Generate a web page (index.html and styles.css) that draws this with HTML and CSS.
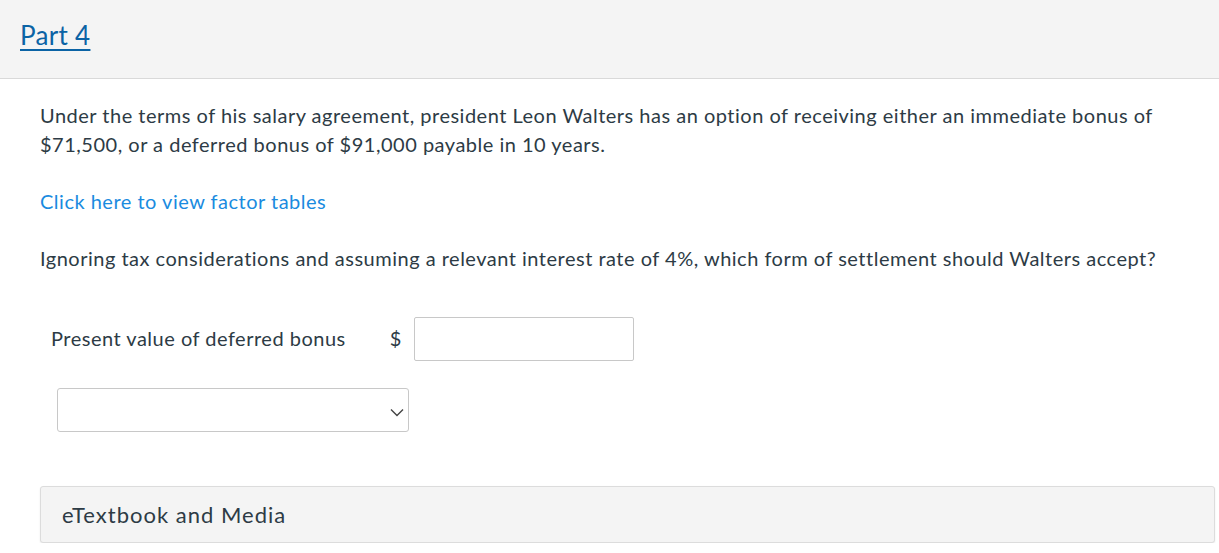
FILE: index.html
```html
<!DOCTYPE html>
<html>
<head>
<meta charset="utf-8">
<link rel="stylesheet" href="styles.css">
</head>
<body>
<header class="part-header">
  <a class="part-link" href="#">Part 4</a>
</header>
<main class="content">
  <p class="text">Under the terms of his salary agreement, president Leon Walters has an option of receiving either an immediate bonus of $71,500, or a deferred bonus of $91,000 payable in 10 years.</p>
  <p class="text link-row"><a class="factor-link" href="#">Click here to view factor tables</a></p>
  <p class="text">Ignoring tax considerations and assuming a relevant interest rate of 4%, which form of settlement should Walters accept?</p>
  <div class="answer-row">
    <span class="answer-label">Present value of deferred bonus</span>
    <span class="currency">$</span>
    <span class="input-box"></span>
  </div>
  <div class="select-row">
    <div class="select-box">
      <svg class="chevron" width="14" height="9" viewBox="0 0 14 9"><path d="M1 1.5 L7 7.5 L13 1.5" fill="none" stroke="#444" stroke-width="1.4"/></svg>
    </div>
  </div>
  <div class="media-box">eTextbook and Media</div>
</main>
</body>
</html>
```
FILE: styles.css
```css
* { box-sizing: border-box; }
html, body { margin: 0; padding: 0; background: #fff; }
body {
  font-family: Lato, "Open Sans", sans-serif;
  color: #2d3b45;
}
.part-header {
  height: 79px;
  background: #f4f4f4;
  border-bottom: 1px solid #d9d9d9;
  padding: 18px 20px 0;
}
.part-link {
  font-size: 26px;
  letter-spacing: 0.3px;
  color: #0b63a5;
  text-decoration: underline;
  text-underline-offset: 4px;
  text-decoration-thickness: 2px;
  line-height: 34px;
}
.content {
  padding: 0 40px 0 40px;
}
.text {
  font-size: 20px;
  letter-spacing: 0.5px;
  line-height: 29px;
  margin: 0;
}
.content > .text:first-child { padding-top: 22px; }
.link-row { margin-top: 28px; }
.factor-link { color: #1a8be0; text-decoration: none; }
.link-row + .text { margin-top: 28px; }
.answer-row {
  display: flex;
  align-items: center;
  margin-top: 44px;
  padding-left: 11px;
}
.answer-label { font-size: 20px; letter-spacing: 0.5px; margin-top: -3px; }
.currency { font-size: 20px; margin-left: 44px; margin-top: -3px; }
.input-box {
  width: 220px;
  height: 44px;
  border: 1px solid #c8c8c8;
  border-radius: 2px;
  margin-left: 13px;
}
.select-row { margin-top: 27px; padding-left: 17px; }
.select-box {
  width: 352px;
  height: 44px;
  border: 1px solid #c8c8c8;
  border-radius: 3px;
  display: flex;
  align-items: center;
  justify-content: flex-end;
  padding-right: 4px;
  padding-top: 4px;
}
.media-box {
  margin-top: 54px;
  margin-right: -36px;
  height: 57px;
  background: #f4f4f4;
  border: 1px solid #dcdcdc;
  border-radius: 3px;
  box-shadow: 0 1px 2px rgba(0,0,0,0.08);
  padding-left: 21px;
  display: flex;
  align-items: center;
  font-size: 22px;
  letter-spacing: 1px;
}
```
